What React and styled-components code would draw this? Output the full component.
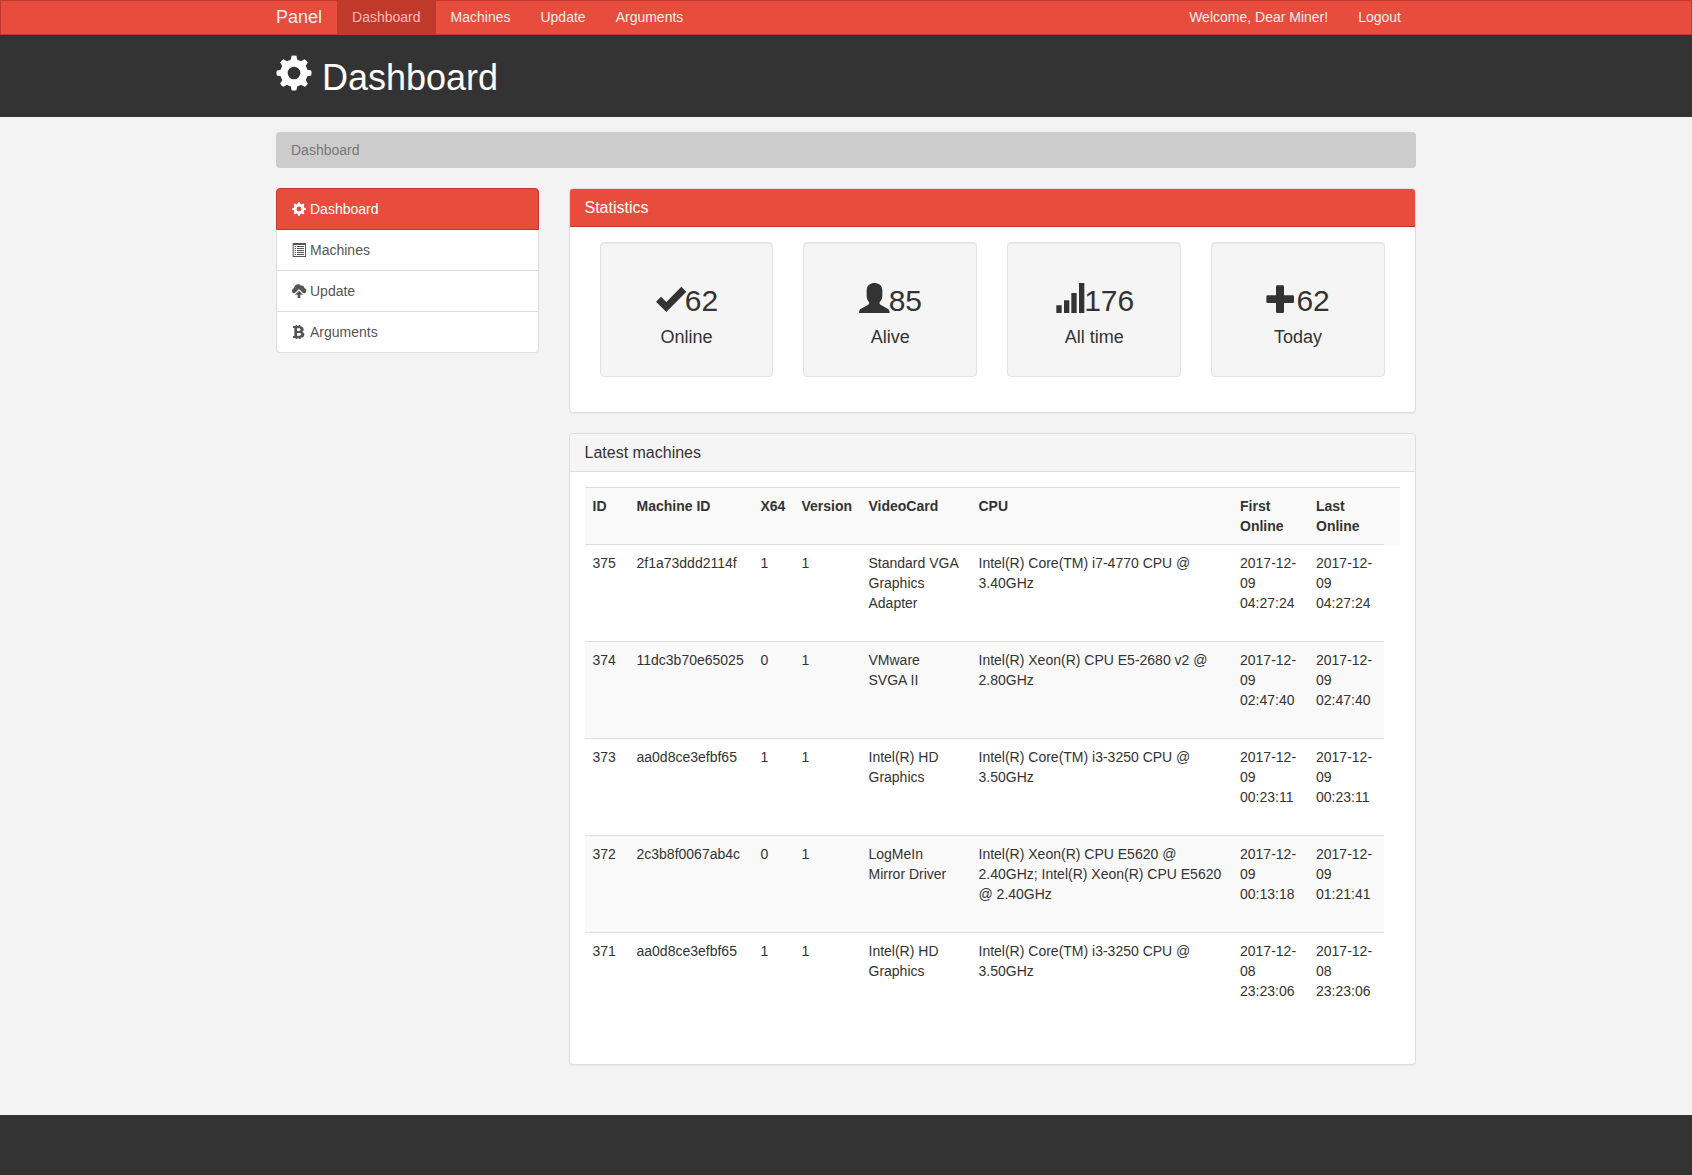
import React from "react";
import styled, { createGlobalStyle, css } from "styled-components";

const color = {
  red: "#e74c3c",
  darkRed: "#c0392b",
  dark: "#333333",
  page: "#f3f3f3",
  line: "#dddddd",
  soft: "#f5f5f5",
};

const GlobalStyle = createGlobalStyle`
  *, *::before, *::after { box-sizing: border-box; }
  body {
    margin: 0;
    background: ${color.page};
    color: ${color.dark};
    font-family: "Liberation Sans", Arial, Helvetica, sans-serif;
    font-size: 14px;
    line-height: 20px;
  }
  a { color: inherit; text-decoration: none; }
`;

const Page = styled.div`
  display: flex;
  flex-direction: column;
  min-height: 100vh;
`;

const Container = styled.div`
  width: 100%;
  max-width: 1170px;
  margin: 0 auto;
  padding: 0 15px;
`;

/* Top navigation */

const Navbar = styled.nav`
  background: ${color.red};
  border: 1px solid ${color.darkRed};
  color: #ecf0f1;
`;

const NavRow = styled(Container)`
  display: flex;
  justify-content: space-between;
`;

const NavGroup = styled.div`
  display: flex;
`;

const Brand = styled.a`
  padding: 6px 15px 7px 0;
  font-size: 18px;
`;

const NavLink = styled.a`
  padding: 6px 15px 7px;
  ${(p) =>
    p.$active &&
    css`
      background: ${color.darkRed};
      color: #ffbbbc;
    `}
`;

/* Page heading */

const Header = styled.header`
  background: ${color.dark};
  color: #ffffff;
  padding: 20px 0 19px;
`;

const Title = styled.h1`
  display: flex;
  align-items: flex-end;
  gap: 10px;
  margin: 0;
  font-size: 36px;
  line-height: 40px;
  font-weight: 500;

  svg {
    margin-bottom: 7px;
  }
`;

const Breadcrumb = styled.ol`
  list-style: none;
  margin: 15px 0 20px;
  padding: 8px 15px;
  border-radius: 4px;
  background: #cccccc;
  color: #777777;
`;

/* Columns */

const Columns = styled.div`
  display: flex;
  margin: 0 -15px 30px;
`;

const Side = styled.aside`
  flex: 0 0 25%;
  padding: 0 15px;
`;

const Main = styled.main`
  flex: 0 0 75%;
  min-width: 0;
  padding: 0 15px;
`;

const Menu = styled.nav`
  display: flex;
  flex-direction: column;
`;

const MenuLink = styled.a`
  display: flex;
  align-items: center;
  gap: 4px;
  padding: 10px 15px;
  border: 1px solid ${color.line};
  background: #ffffff;
  color: #555555;

  & + & {
    border-top: 0;
  }
  &:first-child {
    border-radius: 4px 4px 0 0;
  }
  &:last-child {
    border-radius: 0 0 4px 4px;
  }
  ${(p) =>
    p.$active &&
    css`
      background: ${color.red};
      border-color: ${color.darkRed};
      color: #ffffff;
    `}
`;

/* Panels */

const Panel = styled.section`
  margin-bottom: 20px;
  border: 1px solid ${color.line};
  border-radius: 4px;
  background: #ffffff;
  box-shadow: 0 1px 1px rgba(0, 0, 0, 0.05);
`;

const PanelTitle = styled.h2`
  margin: 0;
  padding: 10px 15px;
  border-bottom: 1px solid ${(p) => (p.$primary ? color.darkRed : color.line)};
  border-radius: 3px 3px 0 0;
  background: ${(p) => (p.$primary ? color.red : color.soft)};
  color: ${(p) => (p.$primary ? "#ffffff" : color.dark)};
  font-size: 16px;
  line-height: 17px;
  font-weight: 500;
`;

const PanelBody = styled.div`
  padding: 15px 15px 35px;
`;

const Stats = styled.div`
  display: grid;
  grid-template-columns: repeat(4, 1fr);
  gap: 30px;
  padding: 0 15px;
`;

const Well = styled.div`
  padding: 19px;
  border: 1px solid #e3e3e3;
  border-radius: 4px;
  background: ${color.soft};
  box-shadow: inset 0 1px 1px rgba(0, 0, 0, 0.05);
  text-align: center;
`;

const StatValue = styled.h3`
  display: flex;
  justify-content: center;
  align-items: flex-end;
  margin: 21px 0 11px;
  font-size: 30px;
  line-height: 30px;
  font-weight: 500;

  svg {
    margin-bottom: 3px;
  }
`;

const StatLabel = styled.h4`
  margin: 0 0 10px;
  font-size: 18px;
  line-height: 20px;
  font-weight: 500;
`;

const Table = styled.table`
  width: 100%;
  table-layout: fixed;
  border-collapse: collapse;
  border-spacing: 0;

  th,
  td {
    padding: 8px;
    border-top: 1px solid ${color.line};
    text-align: left;
    vertical-align: top;
  }
  td {
    padding-bottom: 28px;
  }
  thead th,
  tbody tr:nth-child(even) td {
    background: #f9f9f9;
  }
`;

const Col = styled.col`
  width: ${(p) => (p.$width ? `${p.$width}px` : "auto")};
`;

const Footer = styled.footer`
  flex: 1 0 60px;
  background: ${color.dark};
`;

/* Icons */

const IconSvg = styled.svg`
  display: block;
  flex: none;
  overflow: visible;
  fill: currentColor;
`;

const Icon = ({ size, box, children }) => (
  <IconSvg width={size} height={size} viewBox={`0 0 ${box} ${box}`} aria-hidden="true">
    {children}
  </IconSvg>
);

const polar = (deg, r) => {
  const a = (deg * Math.PI) / 180;
  return `${(54 + r * Math.cos(a)).toFixed(1)} ${(54 + r * Math.sin(a)).toFixed(1)}`;
};

const gearPath =
  Array.from({ length: 8 }, (_, i) => {
    const a = i * 45;
    return `${i ? "A41 41 0 0 1 " : "M"}${polar(a - 14, 41)}L${polar(a - 8, 52)}Q${polar(a, 54)} ${polar(
      a + 8,
      52
    )}L${polar(a + 14, 41)}`;
  }).join("") + `A41 41 0 0 1 ${polar(346, 41)}ZM73 54A19 19 0 1 0 35 54A19 19 0 1 0 73 54Z`;

const CogIcon = ({ size }) => (
  <Icon size={size} box={108}>
    <path fillRule="evenodd" d={gearPath} />
  </Icon>
);

const ListIcon = () => (
  <Icon size={14} box={42}>
    <path
      fillRule="evenodd"
      d="M2 0H42V42H2ZM5 6V39H39V6ZM8 9h4v3H8ZM15 9H36v3H15ZM8 15h4v3H8ZM15 15H36v3H15ZM8 21h4v3H8ZM15 21H36v3H15ZM8 27h4v3H8ZM15 27H36v3H15ZM8 33h4v3H8ZM15 33H36v3H15Z"
    />
  </Icon>
);

const UploadIcon = () => (
  <Icon size={14} box={42}>
    <path d="M6 28C3 28 0 25 0 21C0 17 3 13 6 13C6 6 12 1 18 1C22 1 25 2 27 5C33 4 37 8 37 12C41 13 43 17 43 20C43 25 40 28 36 28H34L21 15L8 28Z" />
    <path d="M21 20L33 32H25V42H17V32H9Z" />
  </Icon>
);

const BitcoinIcon = () => (
  <Icon size={14} box={42}>
    <path
      fillRule="evenodd"
      d="M3 3H11V0H16V3H20V0H25V3.400C31 4 35 8 35 13C35 17 33 20 30 21C35 22 37 25 37 29C37 34 33 38 26 38.600V42H20V39H16V42H11V39H3V33H7V9H3ZM15 10V18H21C27 18 27 10 21 10ZM15 24V32H22C29 32 29 24 22 24Z"
    />
  </Icon>
);

const CheckIcon = () => (
  <Icon size={30} box={90}>
    <path d="M3 56L18 41L34 57L79 11L94 26L34 87Z" />
  </Icon>
);

const UserIcon = () => (
  <Icon size={30} box={90}>
    <path d="M46 0C58 0 70 6 70 22V38C70 46 66 53 62 57C61 62 62 64 66 66L86 77C90 79 92 82 92 90H0C0 82 2 79 6 77L26 66C30 64 31 62 30 57C26 53 23 46 23 38V22C23 6 35 0 46 0Z" />
  </Icon>
);

const SignalIcon = () => (
  <Icon size={30} box={90}>
    <path d="M7 67h16v23h-16ZM30 52h16v38h-16ZM52 30h16v60h-16ZM75 0h16v90h-16Z" />
  </Icon>
);

const PlusIcon = () => (
  <Icon size={30} box={90}>
    <path d="M34 7H50Q54 7 54 11V37H80Q84 37 84 41V56Q84 60 80 60H54V86Q54 90 50 90H34Q30 90 30 86V60H5Q1 60 1 56V41Q1 37 5 37H30V11Q30 7 34 7Z" />
  </Icon>
);

/* Data */

const navLinks = ["Dashboard", "Machines", "Update", "Arguments"];

const menu = [
  { label: "Dashboard", icon: <CogIcon size={14} /> },
  { label: "Machines", icon: <ListIcon /> },
  { label: "Update", icon: <UploadIcon /> },
  { label: "Arguments", icon: <BitcoinIcon /> },
];

const stats = [
  { label: "Online", value: 62, icon: <CheckIcon /> },
  { label: "Alive", value: 85, icon: <UserIcon /> },
  { label: "All time", value: 176, icon: <SignalIcon /> },
  { label: "Today", value: 62, icon: <PlusIcon /> },
];

const columns = [
  { title: "ID", width: 44 },
  { title: "Machine ID", width: 124 },
  { title: "X64", width: 41 },
  { title: "Version", width: 67 },
  { title: "VideoCard", width: 110 },
  { title: "CPU" },
  { title: "First Online", width: 76 },
  { title: "Last Online", width: 76 },
  { title: "", width: 16 },
];

const machines = [
  ["375", "2f1a73ddd2114f", "1", "1", "Standard VGA Graphics Adapter", "Intel(R) Core(TM) i7-4770 CPU @ 3.40GHz", "2017-12-09 04:27:24", "2017-12-09 04:27:24"],
  ["374", "11dc3b70e65025", "0", "1", "VMware SVGA II", "Intel(R) Xeon(R) CPU E5-2680 v2 @ 2.80GHz", "2017-12-09 02:47:40", "2017-12-09 02:47:40"],
  ["373", "aa0d8ce3efbf65", "1", "1", "Intel(R) HD Graphics", "Intel(R) Core(TM) i3-3250 CPU @ 3.50GHz", "2017-12-09 00:23:11", "2017-12-09 00:23:11"],
  ["372", "2c3b8f0067ab4c", "0", "1", "LogMeIn Mirror Driver", "Intel(R) Xeon(R) CPU E5620 @ 2.40GHz; Intel(R) Xeon(R) CPU E5620 @ 2.40GHz", "2017-12-09 00:13:18", "2017-12-09 01:21:41"],
  ["371", "aa0d8ce3efbf65", "1", "1", "Intel(R) HD Graphics", "Intel(R) Core(TM) i3-3250 CPU @ 3.50GHz", "2017-12-08 23:23:06", "2017-12-08 23:23:06"],
];

/* A date may wrap before its day. */
const Timestamp = ({ value }) => (
  <time dateTime={value}>
    {value.slice(0, 8)}
    <wbr />
    {value.slice(8)}
  </time>
);

export default function App() {
  return (
    <Page>
      <GlobalStyle />
      <Navbar>
        <NavRow>
          <NavGroup>
            <Brand href="#">Panel</Brand>
            {navLinks.map((label, i) => (
              <NavLink key={label} href="#" $active={i === 0}>
                {label}
              </NavLink>
            ))}
          </NavGroup>
          <NavGroup>
            <NavLink href="#">Welcome, Dear Miner!</NavLink>
            <NavLink href="#">Logout</NavLink>
          </NavGroup>
        </NavRow>
      </Navbar>

      <Header>
        <Container>
          <Title>
            <CogIcon size={36} />
            Dashboard
          </Title>
        </Container>
      </Header>

      <Container>
        <Breadcrumb>
          <li>Dashboard</li>
        </Breadcrumb>

        <Columns>
          <Side>
            <Menu>
              {menu.map(({ label, icon }, i) => (
                <MenuLink key={label} href="#" $active={i === 0}>
                  {icon}
                  {label}
                </MenuLink>
              ))}
            </Menu>
          </Side>

          <Main>
            <Panel>
              <PanelTitle $primary>Statistics</PanelTitle>
              <PanelBody>
                <Stats>
                  {stats.map(({ label, value, icon }) => (
                    <Well key={label}>
                      <StatValue>
                        {icon}
                        {value}
                      </StatValue>
                      <StatLabel>{label}</StatLabel>
                    </Well>
                  ))}
                </Stats>
              </PanelBody>
            </Panel>

            <Panel>
              <PanelTitle>Latest machines</PanelTitle>
              <PanelBody>
                <Table>
                  <colgroup>
                    {columns.map(({ title, width }) => (
                      <Col key={title} $width={width} />
                    ))}
                  </colgroup>
                  <thead>
                    <tr>
                      {columns.map(({ title }) => (
                        <th key={title} scope="col">
                          {title}
                        </th>
                      ))}
                    </tr>
                  </thead>
                  <tbody>
                    {machines.map((row) => (
                      <tr key={row[0]}>
                        {row.map((cell, i) => (
                          <td key={i}>{i > 5 ? <Timestamp value={cell} /> : cell}</td>
                        ))}
                      </tr>
                    ))}
                  </tbody>
                </Table>
              </PanelBody>
            </Panel>
          </Main>
        </Columns>
      </Container>

      <Footer />
    </Page>
  );
}
